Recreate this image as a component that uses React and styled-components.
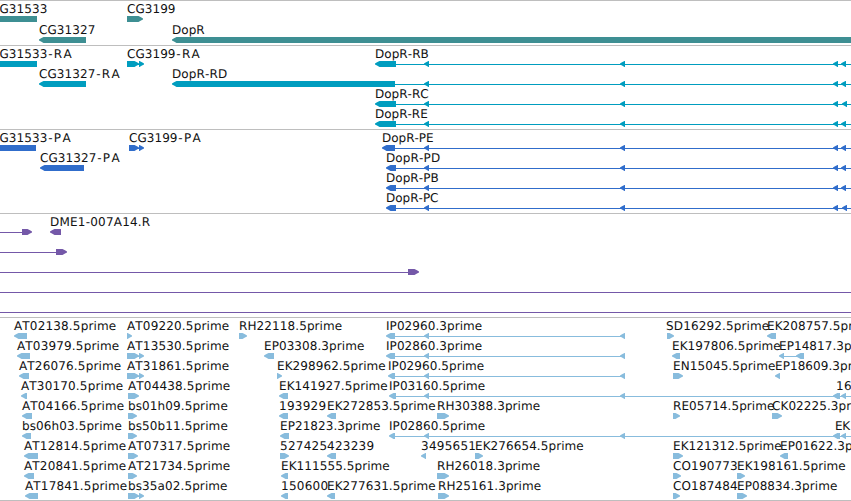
import React from "react";
import styled, { createGlobalStyle } from "styled-components";

const GlobalStyle = createGlobalStyle`
  body { margin: 0; background: #fff; overflow: hidden; }
`;

const Browser = styled.main`
  display: flex;
  flex-direction: column;
  width: 851px;
  height: 501px;
  overflow: hidden;
  background: #fff;
  color: #000;
  font-family: "DejaVu Sans", sans-serif;
  font-size: 12px;
  font-kerning: none;
  text-rendering: geometricPrecision;
`;

const Track = styled.section`
  box-sizing: border-box;
  flex: none;
  display: flex;
  flex-direction: column;
  height: ${(p) => p.$height}px;
  border-top: 1px solid #bebebe;
  color: ${(p) => p.$color};
`;

const Row = styled.div`
  position: relative;
  flex: none;
  height: ${(p) => p.$height}px;
`;

const Label = styled.span`
  position: absolute;
  top: 1px;
  left: ${(p) => p.$x}px;
  color: #111;
  line-height: 14px;
  letter-spacing: ${(p) => p.$spacing}px;
  white-space: pre;
`;

const Suffix = styled.span`
  margin-left: 0.8px;
  letter-spacing: 1.3px;
`;

const Glyphs = styled.svg`
  position: absolute;
  top: 15px;
  left: 0;
  display: block;
  fill: currentColor;
`;

const EndRule = styled.div`
  flex: none;
  height: 1px;
  background: #bebebe;
`;

// Shapes: b = plain bar, l / r = arrow pointing left / right, n = thin line.
function Shape({ kind, from, to }) {
  if (kind === "n")
    return <rect x={from} y="3" width={to - from} height="1" shapeRendering="crispEdges" />;
  if (kind === "b") return <rect x={from} y="0" width={to - from} height="6" />;
  const head = Math.min(5, to - from);
  const tip = kind === "l" ? from : to;
  const tail = kind === "l" ? to : from;
  const dir = kind === "l" ? 1 : -1;
  const mid = tip + dir * head * 0.4;
  const neck = tip + dir * head * 0.9;
  return (
    <path d={`M${tip} 2.6L${mid} 1.2L${neck} 0H${tail}V6H${neck}L${mid} 4.6L${tip} 3.6Z`} />
  );
}

// Whole-pixel advances make digit runs slightly wider and some capitals narrower.
const advance = { C: -0.38, G: -0.3, E: -0.45, K: -0.4, I: -0.5, P: -0.3, R: -0.3, A: 0.3, T: 0.3, D: 0.5, S: -0.3, M: 0.5, "-": 0.5, ".": 0.19 };
function spacingFor(text) {
  let extra = 0;
  for (const ch of text) {
    if (ch >= "0" && ch <= "9") extra += 0.25;
    else extra += advance[ch] || 0;
  }
  return Math.round((extra / text.length) * 1000) / 1000;
}

function FeatureLabel({ x, text }) {
  const cut = /-[RP]A$/.test(text) ? text.length - 3 : text.length;
  const base = text.slice(0, cut);
  return (
    <Label $x={x} $spacing={spacingFor(base)}>
      {base}
      {cut < text.length && <Suffix>{text.slice(cut)}</Suffix>}
    </Label>
  );
}

const row = (labels, shapes) => ({ labels, shapes });

const introns = (start, last = 841) => [
  ["n", start, 851],
  ["l", 424, 429],
  ["l", 620, 625],
  ["l", 833, 838],
  ["l", last, last + 5],
];
const shortIntrons = [["n", 395, 622], ["l", 424, 429], ["l", 620, 625]];
const longIntrons = [...introns(395), ["l", 834, 840]];
const spliced = (x) => [["r", x, 139], ["n", 138, 141], ["r", 139, 144]];

const tracks = [
  {
    color: "#3e8f93", height: 45, pitch: 21,
    rows: [
      row([[-9, "CG31533"], [127, "CG3199"]], [["b", 0, 37], ["r", 127, 143]]),
      row([[39, "CG31327"], [172, "DopR"]], [["l", 39, 86], ["l", 172, 851]]),
    ],
  },
  {
    color: "#009dbf", height: 84, pitch: 20,
    rows: [
      row([[-9, "CG31533-RA"], [127, "CG3199-RA"], [375, "DopR-RB"]],
        [["b", 0, 37], ...spliced(127), ["l", 375, 396], ...introns(396)]),
      row([[39, "CG31327-RA"], [172, "DopR-RD"]],
        [["l", 39, 86], ["l", 172, 395], ...introns(395)]),
      row([[375, "DopR-RC"]], [["l", 375, 396], ...introns(396, 842)]),
      row([[375, "DopR-RE"]], [["l", 375, 396], ...introns(396)]),
    ],
  },
  {
    color: "#306dcb", height: 84, pitch: 20,
    rows: [
      row([[-9, "CG31533-PA"], [129, "CG3199-PA"], [382, "DopR-PE"]],
        [["b", 0, 36], ...spliced(129), ["l", 382, 395], ...introns(395)]),
      row([[40, "CG31327-PA"], [386, "DopR-PD"]],
        [["l", 40, 84], ["l", 386, 396], ...introns(396)]),
      row([[386, "DopR-PB"]], [["l", 386, 396], ...introns(396)]),
      row([[386, "DopR-PC"]], [["l", 386, 396], ...introns(396, 842)]),
    ],
  },
  {
    color: "#7458a8", height: 104, pitch: 20,
    rows: [
      row([[50, "DME1-007A14.R"]], [["n", 0, 22], ["r", 22, 32], ["l", 50, 61]]),
      row([], [["n", 0, 56], ["r", 56, 67]]),
      row([], [["n", 0, 408], ["r", 408, 419]]),
      row([], [["n", 0, 851]]),
      row([], [["n", 0, 851]]),
    ],
  },
  {
    color: "#88bcdd", height: 183, pitch: 20,
    rows: [
      row([[14, "AT02138.5prime"], [127, "AT09220.5prime"], [239, "RH22118.5prime"], [386, "IP02960.3prime"], [666, "SD16292.5prime"], [767, "EK208757.5prime"]],
        [["l", 14, 27], ["r", 127, 132], ["r", 239, 247], ["l", 386, 395], ...shortIntrons, ["r", 667, 674], ["l", 767, 776]]),
      row([[17, "AT03979.5prime"], [127, "AT13530.5prime"], [264, "EP03308.3prime"], [386, "IP02860.3prime"], [672, "EK197806.5prime"], [779, "EP14817.3prime"]],
        [["l", 17, 30], ...spliced(127), ["l", 264, 274], ["l", 386, 395], ...shortIntrons, ["l", 672, 680], ["l", 779, 784], ["n", 784, 798], ["l", 796, 804]]),
      row([[19, "AT26076.5prime"], [127, "AT31861.5prime"], [277, "EK298962.5prime"], [388, "IP02960.5prime"], [673, "EN15045.5prime"], [775, "EP18609.3prime"]],
        [["l", 19, 29], ...spliced(127), ["r", 277, 282], ["l", 388, 395], ...shortIntrons, ["r", 673, 683], ["l", 775, 780]]),
      row([[21, "AT30170.5prime"], [128, "AT04438.5prime"], [279, "EK141927.5prime"], [389, "IP03160.5prime"], [836, "16"]],
        [["l", 21, 27], ["r", 128, 139], ["l", 279, 288], ["l", 389, 396], ...longIntrons]),
      row([[22, "AT04166.5prime"], [128, "bs01h09.5prime"], [279, "193929"], [327, "EK272853.5prime"], [437, "RH30388.3prime"], [673, "RE05714.5prime"], [772, "CK02225.3prime"]],
        [["l", 22, 32], ["r", 128, 137], ["l", 279, 288], ["l", 327, 336], ["r", 437, 449], ["r", 673, 680], ["r", 772, 782]]),
      row([[22, "bs06h03.5prime"], [128, "bs50b11.5prime"], [280, "EP21823.3prime"], [389, "IP02860.5prime"], [835, "EK"]],
        [["l", 22, 31], ["r", 128, 137], ["l", 280, 289], ["l", 389, 395], ...longIntrons]),
      row([[24, "AT12814.5prime"], [128, "AT07317.5prime"], [280, "527425"], [327, "423239"], [421, "3495651"], [475, "EK276654.5prime"], [673, "EK121312.5prime"], [780, "EP01622.3prime"]],
        [["l", 24, 38], ["r", 128, 138], ["r", 280, 289], ["l", 327, 336], ["l", 421, 426], ["r", 475, 483], ["r", 673, 683], ["l", 780, 788]]),
      row([[24, "AT20841.5prime"], [128, "AT21734.5prime"], [281, "EK111555.5prime"], [437, "RH26018.3prime"], [673, "CO190773"], [737, "EK198161.5prime"]],
        [["l", 24, 34], ["r", 128, 137], ["l", 281, 288], ["r", 437, 449], ["r", 673, 681], ["r", 737, 745]]),
      row([[25, "AT17841.5prime"], [128, "bs35a02.5prime"], [281, "150600"], [327, "EK277631.5prime"], [438, "RH25161.3prime"], [673, "CO187484"], [737, "EP08834.3prime"]],
        [["l", 25, 38], ...spliced(128), ["l", 281, 288], ["l", 327, 335], ["r", 438, 449], ["r", 673, 680], ["r", 737, 747]]),
    ],
  },
];

export default function App() {
  return (
    <>
      <GlobalStyle />
      <Browser>
        {tracks.map((track, t) => (
          <Track key={t} $height={track.height} $color={track.color}>
            {track.rows.map((r, i) => (
              <Row key={i} $height={track.pitch}>
                <Glyphs width="851" height="6" viewBox="0 0 851 6" aria-hidden="true">
                  {r.shapes.map(([kind, from, to], s) => (
                    <Shape key={s} kind={kind} from={from} to={to} />
                  ))}
                </Glyphs>
                {r.labels.map(([x, text]) => (
                  <FeatureLabel key={x} x={x} text={text} />
                ))}
              </Row>
            ))}
          </Track>
        ))}
        <EndRule />
      </Browser>
    </>
  );
}
